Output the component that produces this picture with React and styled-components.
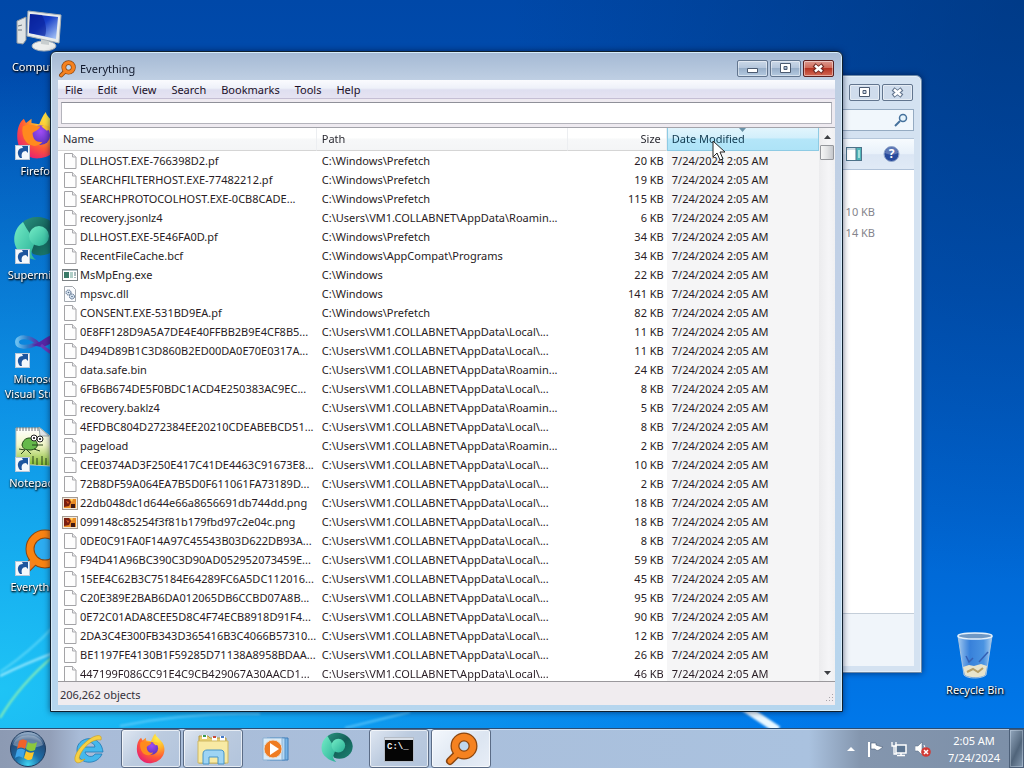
import React from 'react';
import styled, { createGlobalStyle } from 'styled-components';

const Global = createGlobalStyle`
  * { box-sizing: border-box; }
  html, body { margin: 0; height: 100%; }
  #root { height: 100%; }
  body, button, input, table { font-family: "Noto Sans", "Open Sans", sans-serif; font-size: 11px; }
`;

const Screen = styled.div`
  min-height: 100vh;
  display: flex;
  flex-direction: column;
  background: #0a6fd6;
`;

const Desktop = styled.main`
  position: relative;
  flex: 1;
  min-height: 728px;
  overflow: hidden;
  background:
    radial-gradient(ellipse 80% 85% at 0% 95%, rgba(32, 200, 246, 0.95), rgba(18, 165, 240, 0.75) 45%, rgba(10, 110, 220, 0) 100%),
    radial-gradient(ellipse 50% 80% at 100% 0%, rgba(0, 48, 110, 0.55), rgba(0, 55, 130, 0) 100%),
    linear-gradient(180deg, #0048a8 0%, #0055bc 40%, #0064d0 70%, #0078ea 100%);
`;

const Wallpaper = styled.svg`
  position: absolute;
  inset: 0;
  width: 100%;
  height: 100%;
`;

const IconColumn = styled.nav`
  position: relative;
  width: 76px;
  padding-top: 8px;
  display: flex;
  flex-direction: column;
`;

const DesktopLink = styled.a`
  display: flex;
  flex-direction: column;
  align-items: center;
  height: 104px;
  color: #fff;
  font-size: 11px;
  line-height: 15px;
  text-align: center;
  text-decoration: none;
  white-space: nowrap;
  text-shadow: 0 1px 2px #000, 1px 1px 2px #000;
  svg { width: 48px; height: 48px; flex: none; margin-bottom: 3px; }
`;

const BinSpot = styled.div`
  position: absolute;
  right: 11px;
  bottom: 0;
  width: 76px;
  ${DesktopLink} { height: 97px; }
`;

const Frame = styled.section`
  position: absolute;
  display: flex;
  flex-direction: column;
  border: 1px solid ${p => (p.$active ? '#10202e' : '#6c88a6')};
  border-radius: 6px 6px 0 0;
  padding: 0 7px 6px;
  box-shadow: inset 0 0 0 1px ${p => (p.$active ? '#d5ecfa' : '#e2eef8')}, 0 0 6px rgba(0, 15, 50, 0.6);
`;

const MainFrame = styled(Frame)`
  top: 51px;
  left: 50px;
  right: 181px;
  bottom: 16px;
  background: linear-gradient(180deg, #a4b9d4 0, #bfcfe3 28px, #c2d1e8 50%, #b6d6ee 100%);
`;

const BackFrame = styled(Frame)`
  top: 75px;
  left: 68%;
  right: 102px;
  bottom: 55px;
  background: #d4e2f1;
`;

const TitleBar = styled.header`
  display: flex;
  align-items: center;
  gap: 4px;
  height: 28px;
  flex: none;
  color: #10182c;
  h1 { flex: 1; margin: 0; padding-top: 6px; font-size: 11px; font-weight: 400; line-height: 16px; }
  > svg { width: 18px; height: 18px; margin: 6px 0 0 0; }
`;

const Buttons = styled.div`
  display: flex;
  align-self: flex-start;
  gap: 2px;
  margin: 8px 1px 0 auto;
`;

const CaptionButton = styled.button`
  width: 31px;
  height: 17px;
  padding: 0;
  border: 1px solid ${p => (p.$close ? '#5a2020' : '#62758e')};
  border-radius: 2px;
  display: grid;
  place-items: center;
  background: ${p => p.$close
    ? 'linear-gradient(180deg, #dc9a90 0, #cf6856 48%, #b53322 50%, #d36a55 100%)'
    : p.$flat ? '#cfdcec' : 'linear-gradient(180deg, #cbd8e8 0, #b3c5db 48%, #98afc9 50%, #b5cae0 100%)'};
  box-shadow: inset 0 0 0 1px rgba(255, 255, 255, 0.45);
  svg { width: 15px; height: 11px; }
`;

const MenuBar = styled.nav`
  display: flex;
  gap: 1px;
  flex: none;
  height: 19px;
  background: linear-gradient(180deg, #fafbfe 0, #eef1f9 45%, #dfdff0 55%, #e6e3f2 100%);
  border-bottom: 1px solid #c5bfd4;
`;

const MenuItem = styled.button`
  border: 0;
  padding: 0 7px;
  background: none;
  color: #1c1028;
  font-size: 11px;
  line-height: 19px;
`;

const SearchRow = styled.div`
  flex: none;
  padding: 3px;
  background: #eeeaf0;
`;

const SearchInput = styled.input`
  display: block;
  width: 100%;
  height: 22px;
  padding: 0 4px;
  border: 1px solid #b4b4bc;
  border-top-color: #8f9099;
  outline: 0;
  background: #fff;
`;

const ListArea = styled.div`
  flex: 1;
  display: flex;
  min-height: 0;
  overflow: hidden;
  border-top: 1px solid #a3a3aa;
  background: #fff;
`;

const FileTable = styled.table`
  flex: 1;
  align-self: flex-start;
  table-layout: fixed;
  border-collapse: separate;
  border-spacing: 0;
  color: #281c24;
`;

const Col = styled.col`
  width: ${p => p.$w};
`;

const HeadCell = styled.th`
  height: 23px;
  padding: 0 5px 2px;
  text-align: ${p => (p.$right ? 'right' : 'left')};
  font-size: 11px;
  font-weight: 400;
  color: #2c2c34;
  border-right: 1px solid #eceef1;
  border-bottom: 1px solid #d5d5d5;
  background: linear-gradient(180deg, #fff 0, #fff 45%, #f7f8f9 50%, #f4f5f6 100%);
  position: relative;
  ${p => p.$sorted && `
    border-left: 1px solid #8ecbe4;
    border-right-color: #8ecbe4;
    border-bottom-color: #8ecbe4;
    padding-left: 4px;
    color: #123a50;
    background: linear-gradient(180deg, #e2f5fd 0, #d2effb 45%, #b4e6f9 50%, #aee3f7 100%);
  `}
`;

const SortMark = styled.svg`
  position: absolute;
  top: 0;
  left: 50%;
  width: 7px;
  height: 4px;
  margin-left: -4px;
`;

const Cell = styled.td`
  height: 19px;
  padding: 0 ${p => (p.$right ? 3 : 0)}px 0 ${p => (p.$first ? 4 : 5)}px;
  text-align: ${p => (p.$right ? 'right' : 'left')};
  font-size: 11px;
  line-height: 18px;
  white-space: nowrap;
  background: ${p => (p.$sorted ? '#f5f5f6' : '#fff')};
`;

const NameBox = styled.div`
  display: flex;
  align-items: center;
  gap: 2px;
  svg { width: 16px; height: 16px; flex: none; }
`;

const ScrollBar = styled.div`
  width: 16px;
  flex: none;
  display: flex;
  flex-direction: column;
  background: linear-gradient(90deg, #ececee, #f5f5f7 60%, #f0f0f2);
`;

const ScrollButton = styled.button`
  height: 17px;
  padding: 0;
  border: 0;
  display: grid;
  place-items: center;
  background: none;
  svg { width: 7px; height: 4px; }
`;

const ScrollThumb = styled.div`
  height: 15px;
  margin: 0 1px auto;
  border: 1px solid #95979c;
  border-radius: 1px;
  background: linear-gradient(90deg, #f6f6f6, #e2e3e5 50%, #c6c8cc);
`;

const StatusBar = styled.footer`
  flex: none;
  display: flex;
  justify-content: space-between;
  align-items: flex-end;
  height: 24px;
  padding: 0 1px 1px 2px;
  border-top: 1px solid #9a989c;
  background: #f0ecef;
  color: #34303a;
  font-size: 11px;
  line-height: 19px;
  svg { width: 11px; height: 11px; }
`;

const AddressRow = styled.div`
  display: flex;
  justify-content: flex-end;
  flex: none;
  height: 30px;
  padding: 8px 0 0;
`;

const AddressSearch = styled.label`
  display: flex;
  align-items: center;
  width: 100%;
  padding-right: 5px;
  border: 1px solid #95abc2;
  background: #f1f7fc;
  input { flex: 1; min-width: 0; height: 18px; border: 0; background: none; outline: 0; }
  svg { width: 14px; height: 14px; }
`;

const ToolStrip = styled.div`
  display: flex;
  justify-content: flex-end;
  align-items: center;
  gap: 20px;
  flex: none;
  height: 32px;
  margin-top: 7px;
  padding-right: 14px;
  border-top: 1px solid #b4c6da;
  border-bottom: 1px solid #b0c2d8;
  background: linear-gradient(180deg, #f7fbfe 0, #e8f1fa 50%, #dbe6f4 52%, #e0eaf6 100%);
`;

const ToolButton = styled.button`
  display: grid;
  padding: 0;
  border: 0;
  background: none;
  svg { width: 17px; height: 16px; }
`;

const SizeList = styled.ul`
  flex: 1;
  margin: 0;
  padding: 31px 39px 0 0;
  list-style: none;
  background: #fff;
  color: #84848c;
  font-size: 11px;
  line-height: 21px;
  text-align: right;
`;

const DetailsPane = styled.div`
  flex: none;
  height: 53px;
  border-top: 1px solid #c4ced9;
  background: #f0f5fa;
`;

const TaskBar = styled.footer`
  position: relative;
  flex: none;
  display: flex;
  height: 40px;
  border-top: 1px solid #2a4d74;
  background: linear-gradient(90deg, #8c9ab3 0, #929fb8 50px, #a9bcd8 80px, #aac2df 79%, #8496ae 84%, #7c8fa8 100%);
  box-shadow: inset 0 1px 0 rgba(225, 240, 255, 0.6);
`;

const StartButton = styled.button`
  width: 59px;
  padding: 0 4px 0 0;
  border: 0;
  background: none;
  display: grid;
  place-items: center;
  svg { width: 38px; height: 38px; }
`;

const TaskButton = styled.button`
  width: 60px;
  height: 39px;
  margin-right: 2px;
  padding: 0;
  display: grid;
  place-items: center;
  border: 1px solid ${p => (p.$open ? '#5b6c86' : 'transparent')};
  border-radius: 3px;
  background: ${p => p.$active
    ? 'linear-gradient(135deg, #f4f8fd, #dce5f1 60%, #e8eef7)'
    : p.$open ? 'linear-gradient(135deg, #dfe7f2 0, #bccbdf 45%, #b2c4dc 100%)' : 'none'};
  box-shadow: ${p => (p.$open ? 'inset 0 0 0 1px rgba(255,255,255,0.65)' : 'none')};
  svg { width: 34px; height: 34px; }
`;

const Tray = styled.div`
  display: flex;
  align-items: center;
  margin-left: auto;
`;

const TrayIcons = styled.div`
  display: flex;
  gap: 8px;
  padding-right: 8px;
`;

const TrayButton = styled.button`
  display: grid;
  place-items: center;
  padding: 0;
  border: 0;
  background: none;
  svg { width: 16px; height: 16px; }
`;

const Clock = styled.time`
  width: 70px;
  color: #fff;
  font-size: 11px;
  line-height: 17px;
  text-align: center;
`;

const ShowDesktop = styled.button`
  width: 15px;
  height: 39px;
  padding: 0;
  border: 1px solid #4c5f78;
  background: linear-gradient(115deg, #93a7bd, #5f7389 45%, #50647a 55%, #8499b0);
  box-shadow: inset 0 0 0 1px rgba(220, 235, 250, 0.35);
`;

const Pointer = styled.svg`
  position: absolute;
  left: 712px;
  top: 140px;
  width: 13px;
  height: 21px;
`;

const ShortcutBadge = () => (
  <g>
    <rect x="1.500" y="33.500" width="14" height="14" fill="#f4f8fc" stroke="#b9c8d8" strokeWidth="1" />
    <path d="M6 46c-4-5-2-10 3-10l-1-2h6v7l-2-2c-4 0-5 3-4 7z" fill="#1d559e" />
  </g>
);

const MagnifierMark = ({ hole = '#bfd8f0' }) => (
  <svg viewBox="0 0 34 34" aria-hidden="true">
    <path d="M14 21 6 29" stroke="#8a4610" strokeWidth="8" strokeLinecap="round" />
    <circle cx="20" cy="14" r="9" fill={hole} stroke="#8a4610" strokeWidth="9" />
    <path d="M14 21 6 29" stroke="#f58220" strokeWidth="5" strokeLinecap="round" />
    <circle cx="20" cy="14" r="9" fill="none" stroke="#f58220" strokeWidth="6.500" />
  </svg>
);

const FirefoxShape = ({ id }) => (
  <g>
    <defs>
      <radialGradient id={id + 'Body'} cx="0.75" cy="0.15" r="1">
        <stop offset="0" stopColor="#fff24a" />
        <stop offset="0.35" stopColor="#ffb02a" />
        <stop offset="0.65" stopColor="#ff5a35" />
        <stop offset="1" stopColor="#e3157d" />
      </radialGradient>
      <radialGradient id={id + 'Core'} cx="0.5" cy="0.3" r="0.8">
        <stop offset="0" stopColor="#a14cf5" />
        <stop offset="1" stopColor="#5230b4" />
      </radialGradient>
    </defs>
    <path d="M2 23C2 16 4 10 8 7l2 4 5-4 0 4 7 1c2-4 3-8 6-11 1 5 7 8 10 13 8 13-1 28-16 29C10 44 2 35 2 23z" fill={`url(#${id}Body)`} />
    <circle cx="23" cy="22" r="9" fill={`url(#${id}Core)`} />
    <path d="M7 14c5-3 9-1 16 0-1 3-5 4-7 6 0 6 4 9 9 8-3 5-11 5-15 0-3-4-4-9-3-14z" fill="#ff8a1e" />
    <path d="M24 14c5-2 9 0 11 5-3-2-5-2-6-1z" fill="#ffc62e" />
  </g>
);

const TealOrb = ({ id }) => (
  <g>
    <defs>
      <linearGradient id={id + 'a'} x1="0" y1="0" x2="1" y2="1">
        <stop offset="0" stopColor="#2a9480" />
        <stop offset="0.5" stopColor="#145f58" />
        <stop offset="1" stopColor="#1c8674" />
      </linearGradient>
      <linearGradient id={id + 'b'} x1="0" y1="0" x2="1" y2="1">
        <stop offset="0" stopColor="#74ecc6" />
        <stop offset="1" stopColor="#28b096" />
      </linearGradient>
    </defs>
    <path d="M8 7C20-5 44 2 46 20c1 14-14 23-27 18L10 24z" fill={`url(#${id}a)`} />
    <path d="M9 6C-2 14-3 31 8 38c3 3 8 5 14 6-5-4-5-7-4-10l3-8C18 20 13 14 9 6z" fill={`url(#${id}b)`} />
    <circle cx="25" cy="20" r="10" fill={`url(#${id}b)`} />
  </g>
);

const ComputerIcon = () => (
  <svg viewBox="0 0 48 48" aria-hidden="true">
    <defs><linearGradient id="scr" x1="0" y1="0" x2="1" y2="1"><stop offset="0" stopColor="#0720a0" /><stop offset="0.45" stopColor="#1740c8" /><stop offset="1" stopColor="#b4d0fa" /></linearGradient></defs>
    <path d="m3 13 9-4v23l-3 4-6-1z" fill="#dfe3e4" stroke="#9098a0" />
    <path d="M4 18 8 17M4 22h4" stroke="#6e7880" />
    <ellipse cx="30" cy="38" rx="12" ry="5" fill="#eceeed" stroke="#aab2b8" />
    <path d="m27 29 8 1v7l-8-1z" fill="#c8cecf" />
    <path d="m14 3 33 4-2 28-32-7z" fill="#e9ecec" stroke="#a6afb5" />
    <path d="m16 6 28 3-2 22-27-6z" fill="url(#scr)" />
    <path d="m16 6 12 1c4 8 5 15 3 21l-16-3z" fill="#081f96" opacity="0.6" />
  </svg>
);

const FirefoxDesktop = () => (
  <svg viewBox="0 0 48 48" aria-hidden="true"><g transform="translate(1 -1) scale(1.1)"><FirefoxShape id="deskFox" /></g><ShortcutBadge /></svg>
);

const SupermiumIcon = () => (
  <svg viewBox="0 0 48 48" aria-hidden="true"><TealOrb id="deskOrb" /><ShortcutBadge /></svg>
);

const VisualStudioIcon = () => (
  <svg viewBox="0 0 48 48" aria-hidden="true">
    <defs><linearGradient id="vs" x1="0" y1="0" x2="1" y2="0"><stop offset="0" stopColor="#6cc0f0" /><stop offset="0.5" stopColor="#2f7cc8" /><stop offset="1" stopColor="#5a2ea8" /></linearGradient></defs>
    <path d="M24 24C16 15 3 16 3 22c0 6 11 6 19 2" fill="none" stroke="url(#vs)" strokeWidth="4" />
    <path d="M18 25c9-1 14-11 28-12l0 9c-9-1-13 5-19 5z" fill="#5527a4" />
    <path d="M27 25c8 7 12 10 20 10" fill="none" stroke="#6a3ab8" strokeWidth="3" />
    <ShortcutBadge />
  </svg>
);

const NotepadIcon = () => (
  <svg viewBox="0 0 48 48" aria-hidden="true">
    <defs><linearGradient id="npg" x1="0" y1="0" x2="0" y2="1"><stop offset="0" stopColor="#fff" /><stop offset="0.45" stopColor="#f2f7c8" /><stop offset="1" stopColor="#7fb928" /></linearGradient></defs>
    <path d="M2 4h24l10 8v30l-34-2z" fill="url(#npg)" stroke="#c2c7bd" />
    <path d="M3 3v4M6 3v4M9 3v4M12 3v4M15 3v4M18 3v4M21 3v4M24 3v4" stroke="#6e7276" />
    <path d="m25 3 10 9h-9z" fill="#dfe4e8" stroke="#9aa" />
    <path d="M8 21c1-7 8-9 13-5 4 4 3 9-4 10-6 0-8-1-9-5z" fill="#65b94a" stroke="#214818" />
    <circle cx="20" cy="14" r="3" fill="#fff" stroke="#222" /><circle cx="26" cy="15" r="3" fill="#fff" stroke="#222" />
    <circle cx="20" cy="14" r="1" /><circle cx="26" cy="15" r="1" />
    <path d="m5 25 6 1-4 4m6-4 4 4m3-5 6 2m-8-6 11 0M19 40v-8m4 9v-7m5 7v-9m4 9v-7" stroke="#25401b" fill="none" />
    <ShortcutBadge />
  </svg>
);

const EverythingDesktop = () => (
  <svg viewBox="0 0 48 48" aria-hidden="true">
    <path d="m21 32-9 9" stroke="#8a4610" strokeWidth="9" />
    <circle cx="31" cy="21" r="15" fill="#2dacf0" stroke="#8a4610" strokeWidth="9" />
    <path d="m21 32-9 9" stroke="#f58220" strokeWidth="7" />
    <circle cx="31" cy="21" r="15" fill="none" stroke="#f98312" strokeWidth="7" />
    <ShortcutBadge />
  </svg>
);

const BinIcon = () => (
  <svg viewBox="0 0 48 48" aria-hidden="true">
    <defs><linearGradient id="bin" x1="0" y1="0" x2="1" y2="0"><stop offset="0" stopColor="#b6d4f2" stopOpacity="0.9" /><stop offset="0.35" stopColor="#4a86d8" stopOpacity="0.75" /><stop offset="0.75" stopColor="#6aa2e2" stopOpacity="0.7" /><stop offset="1" stopColor="#c2dcf4" stopOpacity="0.9" /></linearGradient></defs>
    <path d="m7 5 6 39c3 4 18 4 22 0l6-39z" fill="url(#bin)" stroke="#a4c3e2" />
    <path d="m12 36 6-2 5 1 7-2 6 2-2 9c-4 3-16 3-20 0z" fill="#e8e4cc" />
    <path d="m16 41 6-3 5 3 5-4" stroke="#b59f68" strokeWidth="2" fill="none" />
    <path d="m15 25 3 6 4-4m6 4 9-10" stroke="#3460b4" strokeWidth="1.500" fill="none" />
    <ellipse cx="24" cy="5" rx="17" ry="3" fill="#6f98c4" stroke="#e4f0fa" strokeWidth="1.500" />
  </svg>
);

const FileIcon = ({ kind }) => {
  if (kind === 'exe') return (
    <svg viewBox="0 0 16 16" aria-hidden="true"><rect x="0.500" y="2.500" width="15" height="11" fill="#fff" stroke="#7d8285" /><path d="M1 3h14v1H1z" fill="#b9c6cc" /><path d="M2 5h5v6H2z" fill="#3a7a68" /><path d="M8 5h3v6H8z" fill="#b0cfc8" /><path d="M13 5v4M13 10v1" stroke="#52767a" /></svg>
  );
  if (kind === 'dll') return (
    <svg viewBox="0 0 16 16" aria-hidden="true"><path d="M2.500.5h8l3 3v12h-11z" fill="#fbfcfe" stroke="#a3a8ae" /><circle cx="6.500" cy="6.500" r="2.500" fill="#dce8f4" stroke="#4f6684" strokeDasharray="1.500 0.500" /><circle cx="10" cy="10.500" r="2.500" fill="#dce8f4" stroke="#4f6684" strokeDasharray="1.500 0.500" /><circle cx="6.500" cy="6.500" r="0.800" fill="#4f6684" /><circle cx="10" cy="10.500" r="0.800" fill="#4f6684" /></svg>
  );
  if (kind === 'png') return (
    <svg viewBox="0 0 16 16" aria-hidden="true"><rect x="0.500" y="2.500" width="15" height="12" fill="#f5e9da" stroke="#a49b92" /><path d="M2 4h12v9H2z" fill="#e98a24" /><path d="M2 4h5l2 3-2 4-5 1z" fill="#7a1e10" /><path d="m4 6 3 1-1 2z" fill="#dd5c20" /><path d="M9 9h4v4H9z" fill="#421811" /><path d="M8 4h3l-1 3z" fill="#ffd058" /></svg>
  );
  return (
    <svg viewBox="0 0 16 16" aria-hidden="true"><path d="M2.500.5h8l3.500 3.500v11.500h-11.500z" fill="#fdfdfd" stroke="#a3a3a6" /><path d="M10.500.5v3.500h3.500" fill="#ececee" stroke="#ababae" /></svg>
  );
};

const MaximizeGlyph = () => <svg viewBox="0 0 15 11" aria-hidden="true"><path fillRule="evenodd" d="M2.500.5h10v9h-10zM6 3.500h3v3H6z" fill="#fff" stroke="#4b5a70" /></svg>;
const CloseGlyph = ({ stroke }) => <svg viewBox="0 0 15 11" aria-hidden="true"><path d="m3 2 9 7m0-7-9 7" stroke={stroke} strokeWidth="4.500" /><path d="m4 2.500 7 6m0-6-7 6" stroke="#fff" strokeWidth="2.500" /></svg>;
const MinimizeGlyph = () => <svg viewBox="0 0 15 11" aria-hidden="true"><path d="M2.500 5.500h10v4h-10z" fill="#fff" stroke="#4b5a70" /></svg>;

const P = 'C:\\Windows\\Prefetch';
const W = 'C:\\Windows';
const L = 'C:\\Users\\VM1.COLLABNET\\AppData\\Local\\...';
const R = 'C:\\Users\\VM1.COLLABNET\\AppData\\Roamin...';

const files = [
  ['DLLHOST.EXE-766398D2.pf', P, 20],
  ['SEARCHFILTERHOST.EXE-77482212.pf', P, 19],
  ['SEARCHPROTOCOLHOST.EXE-0CB8CADE...', P, 115],
  ['recovery.jsonlz4', R, 6],
  ['DLLHOST.EXE-5E46FA0D.pf', P, 34],
  ['RecentFileCache.bcf', 'C:\\Windows\\AppCompat\\Programs', 34],
  ['MsMpEng.exe', W, 22, 'exe'],
  ['mpsvc.dll', W, 141, 'dll'],
  ['CONSENT.EXE-531BD9EA.pf', P, 82],
  ['0E8FF128D9A5A7DE4E40FFBB2B9E4CF8B5...', L, 11],
  ['D494D89B1C3D860B2ED00DA0E70E0317A...', L, 11],
  ['data.safe.bin', R, 24],
  ['6FB6B674DE5F0BDC1ACD4E250383AC9EC...', L, 8],
  ['recovery.baklz4', R, 5],
  ['4EFDBC804D272384EE20210CDEABEBCD51...', L, 8],
  ['pageload', R, 2],
  ['CEE0374AD3F250E417C41DE4463C91673E8...', L, 10],
  ['72B8DF59A064EA7B5D0F611061FA73189D...', L, 2],
  ['22db048dc1d644e66a8656691db744dd.png', L, 18, 'png'],
  ['099148c85254f3f81b179fbd97c2e04c.png', L, 18, 'png'],
  ['0DE0C91FA0F14A97C45543B03D622DB93A...', L, 8],
  ['F94D41A96BC390C3D90AD052952073459E...', L, 59],
  ['15EE4C62B3C75184E64289FC6A5DC112016...', L, 45],
  ['C20E389E2BAB6DA012065DB6CCBD07A8B...', L, 95],
  ['0E72C01ADA8CEE5D8C4F74ECB8918D91F4...', L, 90],
  ['2DA3C4E300FB343D365416B3C4066B57310...', L, 12],
  ['BE1197FE4130B1F59285D71138A8958BDAA...', L, 26],
  ['447199F086CC91E4C9CB429067A30AACD1...', L, 46],
];

const menus = ['File', 'Edit', 'View', 'Search', 'Bookmarks', 'Tools', 'Help'];

const shortcuts = [
  { label: 'Computer', Icon: ComputerIcon },
  { label: 'Firefox', Icon: FirefoxDesktop },
  { label: 'Supermium', Icon: SupermiumIcon },
  { label: <>Microsoft<br />Visual Studio</>, Icon: VisualStudioIcon },
  { label: 'Notepad++', Icon: NotepadIcon },
  { label: 'Everything', Icon: EverythingDesktop },
];

const StartOrb = () => (
  <svg viewBox="0 0 38 38" aria-hidden="true">
    <defs><radialGradient id="orb" cx="0.5" cy="0.95" r="0.9"><stop offset="0" stopColor="#3fd4f2" /><stop offset="0.4" stopColor="#1c6ea8" /><stop offset="0.8" stopColor="#234a78" /><stop offset="1" stopColor="#8fa9c4" /></radialGradient></defs>
    <circle cx="19" cy="19" r="17.500" fill="url(#orb)" stroke="#1e3a5c" />
    <path d="M4 15c3-13 27-13 30 0-8 4-22 4-30 0z" fill="#fff" opacity="0.3" />
    <path d="M10 11c3-2 5-2 8 0l-2 8c-3-2-5-2-8 0z" fill="#f0622a" />
    <path d="M19 12c3 2 6 2 9 0l-2 8c-3 2-6 1-9-1z" fill="#8cc83c" />
    <path d="M8 20c3-2 5-1 8 0l-2 8c-3-2-5-2-8 0z" fill="#3da4ea" />
    <path d="M17 21c3 2 5 2 8 1l-2 7c-3 2-5 1-8-1z" fill="#fcc62a" />
  </svg>
);

const IeIcon = () => (
  <svg viewBox="0 0 34 34" aria-hidden="true">
    <path d="M31 20H13c1 5 8 6 10 2h7c-5 12-25 11-25-4C5 4 29 1 31 20zM13 15h10c-1-6-9-6-10 0z" fill="#45b8ec" stroke="#2179b4" strokeWidth="0.800" />
    <path d="M29 8c2-7-7-5-14 1C7 15 0 26 4 30c2 2 6 0 9-3-5 2-7 1-5-4C11 16 20 6 29 8z" fill="#f6d044" stroke="#c89a1c" strokeWidth="0.600" />
  </svg>
);

const FolderIcon = () => (
  <svg viewBox="0 0 34 34" aria-hidden="true">
    <path d="M3 4h9l2 2h16v25H3z" fill="#e8cf70" stroke="#b59b45" />
    <path d="M6 3h5v4H6zM16 5h5v4h-5zM24 4h5v5h-5z" fill="#fff" /><path d="M7 3h3v2H7z" fill="#3b9a54" /><path d="M17 4h3v2h-3z" fill="#c84a3a" /><path d="M25 4h3v2h-3z" fill="#4679c8" />
    <path d="M2 9h30v22H2z" fill="#f8eaa4" stroke="#cfb862" />
    <path d="M7 32V22c0-3 2-4 4-4h13c3 0 4 1 4 4v10h-6v-7h-9v7z" fill="#9ed4f4" stroke="#4694c8" />
  </svg>
);

const MediaIcon = () => (
  <svg viewBox="0 0 34 34" aria-hidden="true">
    <path d="M12 6h18v22H12z" fill="#77b4e6" stroke="#3e7cb8" /><path d="M9 6h18v22H9z" fill="#b4d8f4" stroke="#5890c4" /><path d="M5 6h19v22H5z" fill="#d9ebf8" stroke="#8cb2d4" />
    <circle cx="15" cy="17" r="9" fill="#ef7c22" stroke="#e6d8ca" /><path d="m12 11 9 6-9 6z" fill="#fff" />
  </svg>
);

const ConsoleIcon = () => (
  <svg viewBox="0 0 34 34" aria-hidden="true">
    <rect x="2.500" y="5.500" width="29" height="24" fill="#050505" stroke="#b5bcc6" /><path d="M3 6h28v2H3z" fill="#d8dee6" />
    <text x="5" y="17" fill="#f2f2f2" fontFamily="Liberation Mono, monospace" fontSize="9" fontWeight="700">C:\_</text>
  </svg>
);

export default function App() {
  return (
    <>
      <Global />
      <Screen>
        <Desktop>
          <Wallpaper viewBox="0 0 1024 728" preserveAspectRatio="none" aria-hidden="true">
            <defs><filter id="soft"><feGaussianBlur stdDeviation="1" /></filter></defs>
            <g fill="none" filter="url(#soft)">
              <path d="M0 676Q24 664 56 652" stroke="#b8f2ff" strokeWidth="2" opacity="0.8" />
              <path d="M0 672Q30 652 56 624" stroke="#7ce4fc" strokeWidth="2" opacity="0.6" />
              <path d="M0 718Q20 684 56 654" stroke="#8df0b4" strokeWidth="2" />
              <path d="M345 728 410 712M120 726Q190 712 260 714" stroke="#7ed8ff" strokeWidth="2" opacity="0.6" />
              <path d="M742 706 778 730" stroke="#e9f8ff" strokeWidth="8" />
            </g>
          </Wallpaper>

          <IconColumn aria-label="Desktop shortcuts">
            {shortcuts.map(({ label, Icon }, i) => (
              <DesktopLink href="#" key={i}><Icon /><span>{label}</span></DesktopLink>
            ))}
          </IconColumn>

          <BinSpot>
            <DesktopLink href="#"><BinIcon /><span>Recycle Bin</span></DesktopLink>
          </BinSpot>

          <BackFrame aria-label="Folder window">
            <Buttons>
              <CaptionButton $flat aria-label="Maximize folder"><MaximizeGlyph /></CaptionButton>
              <CaptionButton $flat aria-label="Close folder"><CloseGlyph stroke="#63758e" /></CaptionButton>
            </Buttons>
            <AddressRow>
              <AddressSearch>
                <input aria-label="Search folder" />
                <svg viewBox="0 0 14 14" aria-hidden="true"><circle cx="9" cy="5" r="3.500" fill="#e6f4fc" stroke="#45719c" strokeWidth="1.500" /><path d="m6 8-5 5" stroke="#45719c" strokeWidth="2" /></svg>
              </AddressSearch>
            </AddressRow>
            <ToolStrip>
              <ToolButton aria-label="Preview pane">
                <svg viewBox="0 0 17 16" aria-hidden="true"><rect x="0.500" y="1.500" width="15" height="13" fill="#fff" stroke="#4d7289" /><path d="M1 2h9v2H1z" fill="#cfdde6" /><path d="M10 2h5v12h-5z" fill="#4fb4b8" /><path d="M10 2v12" stroke="#4d7289" /><path d="M12 4h2v8h-2z" fill="#a5e0dc" /></svg>
              </ToolButton>
              <ToolButton aria-label="Help">
                <svg viewBox="0 0 17 16" aria-hidden="true"><circle cx="8.500" cy="8" r="7.500" fill="#274a9c" stroke="#93a8cc" /><path d="M2 7a6.500 6 0 0 1 13 0c-4 2-9 2-13 0z" fill="#fff" opacity="0.25" /><text x="8.500" y="12" textAnchor="middle" fill="#fff" fontSize="12" fontWeight="700">?</text></svg>
              </ToolButton>
            </ToolStrip>
            <SizeList><li>10 KB</li><li>14 KB</li></SizeList>
            <DetailsPane />
          </BackFrame>

          <MainFrame $active aria-label="Everything">
            <TitleBar>
              <MagnifierMark />
              <h1>Everything</h1>
              <Buttons>
                <CaptionButton aria-label="Minimize"><MinimizeGlyph /></CaptionButton>
                <CaptionButton aria-label="Maximize"><MaximizeGlyph /></CaptionButton>
                <CaptionButton $close aria-label="Close"><CloseGlyph stroke="#6e2a24" /></CaptionButton>
              </Buttons>
            </TitleBar>
            <MenuBar>{menus.map(m => <MenuItem key={m}>{m}</MenuItem>)}</MenuBar>
            <SearchRow><SearchInput aria-label="Search files" /></SearchRow>
            <ListArea>
              <FileTable>
                <colgroup><Col $w="34%" /><Col $w="33%" /><Col $w="13%" /><Col $w="20%" /></colgroup>
                <thead>
                  <tr>
                    <HeadCell>Name</HeadCell>
                    <HeadCell>Path</HeadCell>
                    <HeadCell $right>Size</HeadCell>
                    <HeadCell $sorted>Date Modified
                      <SortMark viewBox="0 0 7 4" aria-hidden="true"><path d="M0 0h7L3.500 4z" fill="#6a93a8" /></SortMark>
                    </HeadCell>
                  </tr>
                </thead>
                <tbody>
                  {files.map(([name, path, size, kind]) => (
                    <tr key={name}>
                      <Cell $first><NameBox><FileIcon kind={kind} /><span>{name}</span></NameBox></Cell>
                      <Cell>{path}</Cell>
                      <Cell $right>{size} KB</Cell>
                      <Cell $sorted>7/24/2024 2:05 AM</Cell>
                    </tr>
                  ))}
                </tbody>
              </FileTable>
              <ScrollBar>
                <ScrollButton aria-label="Scroll up"><svg viewBox="0 0 7 4" aria-hidden="true"><path d="M0 4h7L3.500 0z" fill="#3d3f44" /></svg></ScrollButton>
                <ScrollThumb />
                <ScrollButton aria-label="Scroll down"><svg viewBox="0 0 7 4" aria-hidden="true"><path d="M0 0h7L3.500 4z" fill="#3d3f44" /></svg></ScrollButton>
              </ScrollBar>
            </ListArea>
            <StatusBar>
              <span>206,262 objects</span>
              <svg viewBox="0 0 11 11" aria-hidden="true"><path d="M9 1h1v1H9zM9 4h1v1H9zM9 7h1v1H9zM6 4h1v1H6zM6 7h1v1H6zM3 7h1v1H3z" fill="#a8a4aa" /></svg>
            </StatusBar>
          </MainFrame>

          <Pointer viewBox="0 0 13 21" aria-hidden="true">
            <path d="M1 1v16l4-4 3 7 3-1-3-7h5z" fill="#fff" stroke="#222" />
          </Pointer>
        </Desktop>

        <TaskBar>
          <StartButton aria-label="Start"><StartOrb /></StartButton>
          <TaskButton aria-label="Internet Explorer"><IeIcon /></TaskButton>
          <TaskButton $open aria-label="Firefox"><svg viewBox="-2 -1 48 48" aria-hidden="true"><FirefoxShape id="barFox" /></svg></TaskButton>
          <TaskButton $open aria-label="Explorer"><FolderIcon /></TaskButton>
          <TaskButton aria-label="Media Player"><MediaIcon /></TaskButton>
          <TaskButton aria-label="Supermium"><svg viewBox="-2 0 50 50" aria-hidden="true"><TealOrb id="barOrb" /></svg></TaskButton>
          <TaskButton $open aria-label="Command Prompt"><ConsoleIcon /></TaskButton>
          <TaskButton $open $active aria-label="Everything"><MagnifierMark /></TaskButton>
          <Tray>
            <TrayIcons>
              <TrayButton aria-label="Show hidden icons"><svg viewBox="0 0 16 16" aria-hidden="true"><path d="m4 10 4-4 4 4z" fill="#fff" /></svg></TrayButton>
              <TrayButton aria-label="Action Center"><svg viewBox="0 0 16 16" aria-hidden="true"><path d="M2 1v15" stroke="#fff" strokeWidth="2" /><path d="M4 2h5v2l3 1 4 1-4 3c-2 1-3 0-4-1H4z" fill="#fff" stroke="#4b5f78" strokeWidth="0.600" /></svg></TrayButton>
              <TrayButton aria-label="Network"><svg viewBox="0 0 16 16" aria-hidden="true"><path d="M5 4h10v8H5z" fill="#5d7692" stroke="#fff" strokeWidth="1.500" /><path d="M6 14.500h8M10 12v2" stroke="#fff" strokeWidth="1.500" /><path d="M1 1v4h4V1M3 5v8h3" stroke="#fff" strokeWidth="1.300" fill="none" /></svg></TrayButton>
              <TrayButton aria-label="Volume muted"><svg viewBox="0 0 16 16" aria-hidden="true"><path d="M0 5h3l4-4v13l-4-4H0z" fill="#fff" stroke="#53667e" strokeWidth="0.500" /><path d="M9 4q3 4 0 7" stroke="#fff" fill="none" /><circle cx="11" cy="11" r="4.800" fill="#d33a35" /><path d="m9 9 4 4m0-4-4 4" stroke="#fff" strokeWidth="1.500" /></svg></TrayButton>
            </TrayIcons>
            <Clock>2:05 AM<br />7/24/2024</Clock>
            <ShowDesktop aria-label="Show desktop" />
          </Tray>
        </TaskBar>
      </Screen>
    </>
  );
}
